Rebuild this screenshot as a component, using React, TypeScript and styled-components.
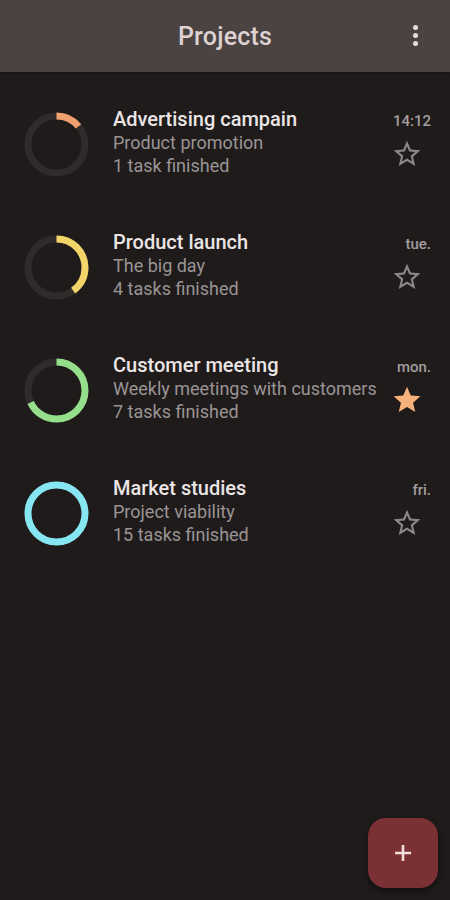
import { FunctionComponent } from "react";
import styled, { createGlobalStyle } from "styled-components";

const GlobalStyle = createGlobalStyle`
  html, body {
    margin: 0;
    padding: 0;
    background: #1f1b1b;
    font-family: Roboto, "Liberation Sans", sans-serif;
  }
`;

const Screen = styled.div`
  width: 450px;
  height: 900px;
  background: #1f1b1b;
  position: relative;
  overflow: hidden;
`;

const Toolbar = styled.header`
  height: 72px;
  background: #4b4242;
  display: flex;
  align-items: center;
  justify-content: center;
  position: relative;
  box-shadow: 0 1px 3px rgba(0, 0, 0, 0.4);
  h1 {
    margin: 0;
    font-size: 25px;
    font-weight: 500;
    color: #ddd1d1;
    letter-spacing: 0.2px;
  }
`;

const MenuButton = styled.div`
  position: absolute;
  right: 32px;
  top: 25px;
  display: flex;
  flex-direction: column;
  gap: 3px;
  span {
    width: 5px;
    height: 5px;
    border-radius: 50%;
    background: #e8dede;
  }
`;

const List = styled.div`
  display: flex;
  flex-direction: column;
  padding-top: 36px;
`;

const Row = styled.div`
  display: flex;
  align-items: flex-start;
  height: 123px;
  padding: 0 19px 0 24px;
`;

const Ring = styled.svg`
  flex: none;
  margin-top: 4px;
`;

const Texts = styled.div`
  flex: 1;
  margin-left: 24px;
  display: flex;
  flex-direction: column;
`;

const Title = styled.div`
  font-size: 20px;
  font-weight: 500;
  color: #ebe5e5;
  line-height: 23px;
`;

const Sub = styled.div`
  font-size: 18px;
  color: #9a9494;
  line-height: 23px;
`;

const Side = styled.div`
  display: flex;
  flex-direction: column;
  align-items: flex-end;
  padding-top: 5px;
`;

const Time = styled.div`
  font-size: 15px;
  font-weight: 500;
  color: #a39d9d;
  line-height: 16px;
`;

const StarBox = styled.div`
  margin-top: 9px;
  margin-right: 8px;
  width: 32px;
  height: 32px;
`;

const Fab = styled.div`
  position: absolute;
  right: 12px;
  bottom: 12px;
  width: 70px;
  height: 70px;
  border-radius: 18px;
  background: #7b3034;
  box-shadow: 0 3px 6px rgba(0, 0, 0, 0.5);
  display: flex;
  align-items: center;
  justify-content: center;
`;

interface Project {
  title: string;
  sub: string;
  done: string;
  time: string;
  color: string;
  progress: number;
  fav: boolean;
}

const projects: Project[] = [
  { title: "Advertising campain", sub: "Product promotion", done: "1 task finished", time: "14:12", color: "#f0a06e", progress: 0.14, fav: false },
  { title: "Product launch", sub: "The big day", done: "4 tasks finished", time: "tue.", color: "#f3d469", progress: 0.4, fav: false },
  { title: "Customer meeting", sub: "Weekly meetings with customers", done: "7 tasks finished", time: "mon.", color: "#95de8b", progress: 0.68, fav: true },
  { title: "Market studies", sub: "Project viability", done: "15 tasks finished", time: "fri.", color: "#86e6f1", progress: 1, fav: false },
];

const ProgressRing: FunctionComponent<{ color: string; progress: number }> = ({ color, progress }) => {
  const r = 28.5;
  const c = 2 * Math.PI * r;
  return (
    <Ring width="65" height="65" viewBox="0 0 65 65">
      <circle cx="32.5" cy="32.5" r={r} fill="none" stroke="#2f2b2b" strokeWidth="7" />
      <circle
        cx="32.5"
        cy="32.5"
        r={r}
        fill="none"
        stroke={color}
        strokeWidth="7"
        strokeDasharray={`${c * progress} ${c}`}
        transform="rotate(-90 32.5 32.5)"
      />
    </Ring>
  );
};

const Star: FunctionComponent<{ filled: boolean }> = ({ filled }) => (
  <StarBox>
    <svg width="32" height="32" viewBox="0 0 24 24">
      {filled ? (
        <path fill="#f6b27a" d="M12 17.27L18.18 21l-1.64-7.03L22 9.24l-7.19-.61L12 2 9.19 8.63 2 9.24l5.46 4.73L5.82 21z" />
      ) : (
        <path
          fill="#8c8686"
          d="M22 9.24l-7.19-.62L12 2 9.19 8.63 2 9.24l5.46 4.73L5.82 21 12 17.27 18.18 21l-1.63-7.03L22 9.24zM12 15.4l-3.76 2.27 1-4.28-3.32-2.88 4.38-.38L12 6.1l1.71 4.04 4.38.38-3.32 2.88 1 4.28L12 15.4z"
        />
      )}
    </svg>
  </StarBox>
);

const App: FunctionComponent = () => {
  return (
    <Screen>
      <GlobalStyle />
      <Toolbar>
        <h1>Projects</h1>
        <MenuButton>
          <span />
          <span />
          <span />
        </MenuButton>
      </Toolbar>
      <List>
        {projects.map((p) => (
          <Row key={p.title}>
            <ProgressRing color={p.color} progress={p.progress} />
            <Texts>
              <Title>{p.title}</Title>
              <Sub>{p.sub}</Sub>
              <Sub>{p.done}</Sub>
            </Texts>
            <Side>
              <Time>{p.time}</Time>
              <Star filled={p.fav} />
            </Side>
          </Row>
        ))}
      </List>
      <Fab>
        <svg width="20" height="20" viewBox="0 0 20 20">
          <path d="M10 2v16M2 10h16" stroke="#f3dede" strokeWidth="2.6" />
        </svg>
      </Fab>
    </Screen>
  );
};

export default App;
